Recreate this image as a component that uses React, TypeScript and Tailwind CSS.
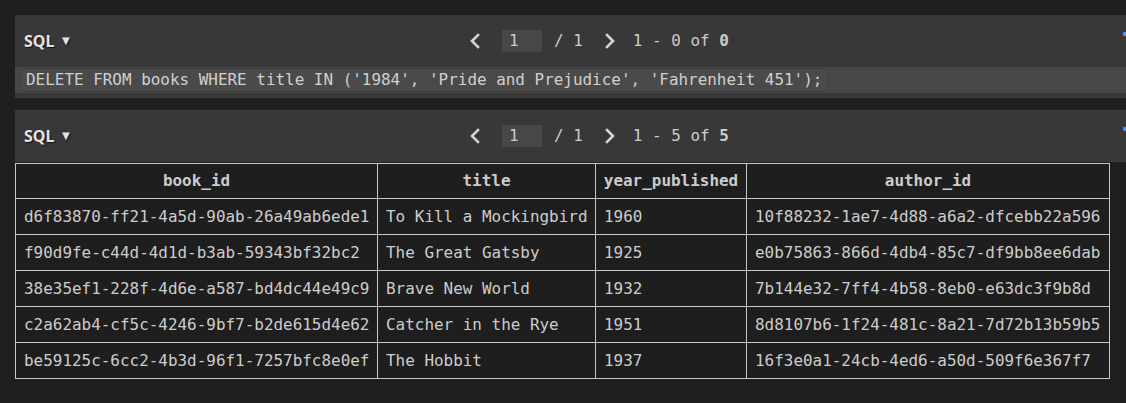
import React from "react";

const mono = "font-['DejaVu_Sans_Mono','Liberation_Mono',monospace]";

function ChevLeft() {
  return (
    <svg width="14" height="16" viewBox="0 0 14 16" className="block">
      <polyline points="10,2 4,8 10,14" fill="none" stroke="#d4d4d4" strokeWidth="2.6" strokeLinecap="square" />
    </svg>
  );
}
function ChevRight() {
  return (
    <svg width="14" height="16" viewBox="0 0 14 16" className="block">
      <polyline points="4,2 10,8 4,14" fill="none" stroke="#d4d4d4" strokeWidth="2.6" strokeLinecap="square" />
    </svg>
  );
}

function Header({ shown, total }: { shown: string; total: string }) {
  return (
    <div className="h-[52px] flex items-center">
      <div className="w-[453px] pl-[9px] flex items-center gap-[5px] font-['Noto_Sans',sans-serif] font-bold text-[16px] text-[#e2e2e2] [text-shadow:1px_1px_1px_#111]">
        <span>SQL</span>
        <span className="text-[13px]">▼</span>
      </div>
      <div className={`flex items-center ${mono} text-[15.95px] text-[#cccccc]`}>
        <ChevLeft />
        <div className="ml-[20px] w-[40px] h-[22px] bg-[#474747] pl-[7px] leading-[22px]">1</div>
        <span className="ml-[12px] whitespace-pre">/ 1</span>
        <span className="ml-[20px]"><ChevRight /></span>
        <span className="ml-[16px] whitespace-pre">
          1 - {shown} of <b>{total}</b>
        </span>
      </div>
      <div className="ml-auto self-start mt-[17px] w-[3px] h-[4px] bg-[#3794ff]" />
    </div>
  );
}

const rows = [
  ["d6f83870-ff21-4a5d-90ab-26a49ab6ede1", "To Kill a Mockingbird", "1960", "10f88232-1ae7-4d88-a6a2-dfcebb22a596"],
  ["f90d9fe-c44d-4d1d-b3ab-59343bf32bc2", "The Great Gatsby", "1925", "e0b75863-866d-4db4-85c7-df9bb8ee6dab"],
  ["38e35ef1-228f-4d6e-a587-bd4dc44e49c9", "Brave New World", "1932", "7b144e32-7ff4-4b58-8eb0-e63dc3f9b8d"],
  ["c2a62ab4-cf5c-4246-9bf7-b2de615d4e62", "Catcher in the Rye", "1951", "8d8107b6-1f24-481c-8a21-7d72b13b59b5"],
  ["be59125c-6cc2-4b3d-96f1-7257bfc8e0ef", "The Hobbit", "1937", "16f3e0a1-24cb-4ed6-a50d-509f6e367f7"],
];

export default function App() {
  return (
    <div className="w-[1126px] h-[403px] overflow-hidden bg-[#1f1f1f] pt-[15px] pl-[15px]">
      <div className="bg-[#383838]">
        <Header shown="0" total="0" />
        <div className="pb-[5px]">
          <div className="h-[26px] bg-[#474747] flex items-center pl-[5px]">
            <div className={`h-[24px] px-[5px] rounded-[3px] border border-[#404040] bg-[#4a4a4a] flex items-center ${mono} text-[15.95px] text-[#d0d0d0] whitespace-pre`}>
              DELETE FROM books WHERE title IN ('1984', 'Pride and Prejudice', 'Fahrenheit 451');
            </div>
          </div>
        </div>
      </div>
      <div className="mt-[12px] bg-[#383838]">
        <Header shown="5" total="5" />
      </div>
      <table className={`mt-px table-fixed w-[1095px] border-collapse ${mono} text-[15.95px] text-[#cccccc] bg-[#1e1e1e]`}>
        <thead>
          <tr>
            {[
              ["book_id", "w-[362px]"],
              ["title", "w-[218px]"],
              ["year_published", "w-[151px]"],
              ["author_id", "w-[363px]"],
            ].map(([h, w]) => (
              <th key={h} className={`${w} h-[35px] border border-[#c8c8c8] font-bold text-center p-0`}>
                {h}
              </th>
            ))}
          </tr>
        </thead>
        <tbody>
          {rows.map((r, i) => (
            <tr key={i}>
              {r.map((c, j) => (
                <td key={j} className="h-[36px] border border-[#c8c8c8] px-[8px] py-0 text-left whitespace-nowrap overflow-hidden">
                  {c}
                </td>
              ))}
            </tr>
          ))}
        </tbody>
      </table>
    </div>
  );
}
